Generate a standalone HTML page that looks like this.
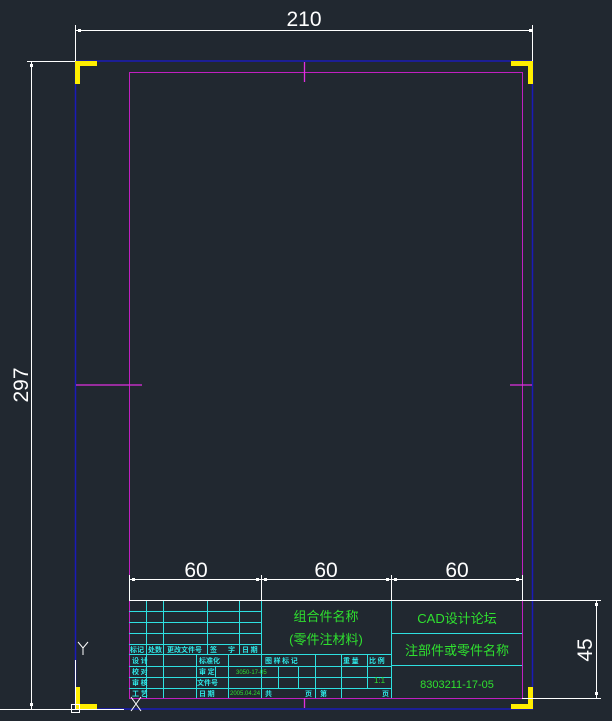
<!DOCTYPE html>
<html><head><meta charset="utf-8"><style>
html,body{margin:0;padding:0;background:#212830;width:612px;height:721px;overflow:hidden}
svg{display:block}
.g{font-family:"Liberation Sans","Noto Sans CJK SC",sans-serif;fill:#2fe02f}
.c{font-family:"Noto Sans CJK SC",sans-serif;fill:#2ee8e8;font-size:7px;font-weight:bold}
</style></head><body>
<svg width="612" height="721" viewBox="0 0 612 721" xmlns="http://www.w3.org/2000/svg">
<rect x="75.5" y="61" width="457" height="648" fill="none" stroke="#1a1ab8" stroke-width="1.5"/>
<rect x="129.5" y="72.5" width="393" height="626" fill="none" stroke="#c020c0" stroke-width="1"/>
<g stroke="#e030e0" stroke-width="1.3">
<line x1="304.5" y1="62" x2="304.5" y2="82"/>
<line x1="304.5" y1="698" x2="304.5" y2="708"/>
<line x1="76" y1="385" x2="142" y2="385"/>
<line x1="510" y1="385" x2="532" y2="385"/>
</g>
<g fill="#ffee00">
<rect x="75" y="61" width="22" height="5"/><rect x="75" y="61" width="5" height="23"/>
<rect x="511" y="61" width="22" height="5"/><rect x="528" y="61" width="5" height="23"/>
<rect x="75" y="704" width="22" height="5"/><rect x="75" y="687" width="5" height="22"/>
<rect x="511" y="704" width="22" height="5"/><rect x="528" y="687" width="5" height="22"/>
</g>
<g stroke="#fff" stroke-width="1" fill="none">
<line x1="75.5" y1="25" x2="75.5" y2="61"/><line x1="532.5" y1="25" x2="532.5" y2="61"/>
<line x1="75" y1="30.5" x2="532" y2="30.5"/>
<line x1="27" y1="61.5" x2="75" y2="61.5"/><line x1="27" y1="709.5" x2="75" y2="709.5"/>
<line x1="31.5" y1="61" x2="31.5" y2="709"/>
<line x1="129.5" y1="575" x2="129.5" y2="600"/><line x1="261.5" y1="575" x2="261.5" y2="600"/>
<line x1="391.5" y1="575" x2="391.5" y2="600"/><line x1="522.5" y1="575" x2="522.5" y2="600"/>
<line x1="129" y1="579.5" x2="522" y2="579.5"/>
<line x1="522" y1="600.5" x2="601" y2="600.5"/><line x1="522" y1="698.5" x2="601" y2="698.5"/>
<line x1="596.5" y1="600" x2="596.5" y2="698"/>
<line x1="0" y1="709.5" x2="124" y2="709.5"/>
<line x1="75.5" y1="660" x2="75.5" y2="709"/>
<rect x="71.5" y="704.5" width="8" height="8"/>
<path d="M131 697 L141 711 M141 697 L131 711"/>
<path d="M78 642 L83 648 L88 642 M83 648 L83 655"/>
</g>
<g fill="#fff">
<rect x="78" y="29" width="3" height="3"/><rect x="529" y="29" width="3" height="3"/>
<rect x="30" y="64" width="3" height="3"/><rect x="30" y="703" width="3" height="3"/>
<rect x="132" y="578" width="3" height="3"/><rect x="256" y="578" width="3" height="3"/>
<rect x="264" y="578" width="3" height="3"/><rect x="386" y="578" width="3" height="3"/>
<rect x="394" y="578" width="3" height="3"/><rect x="516" y="578" width="3" height="3"/>
<rect x="595" y="603" width="3" height="3"/><rect x="595" y="692" width="3" height="3"/>
</g>
<g font-family="Liberation Sans Narrow,Liberation Sans,sans-serif" font-size="21" fill="#fff" text-anchor="middle">
<text x="304" y="26">210</text>
<text x="196" y="577">60</text><text x="326" y="577">60</text><text x="457" y="577">60</text>
<text transform="translate(28,385) rotate(-90)">297</text>
<text transform="translate(592,650) rotate(-90)">45</text>
</g>
<g stroke="#2ee0e0" stroke-width="1" fill="none">
<line x1="261.5" y1="600" x2="261.5" y2="698"/>
<line x1="391.5" y1="600" x2="391.5" y2="698"/>
<line x1="129" y1="611.5" x2="261" y2="611.5"/><line x1="129" y1="622.5" x2="261" y2="622.5"/>
<line x1="129" y1="633.5" x2="261" y2="633.5"/><line x1="129" y1="644.5" x2="261" y2="644.5"/>
<line x1="129" y1="654.5" x2="391" y2="654.5"/><line x1="129" y1="666.5" x2="391" y2="666.5"/>
<line x1="129" y1="677.5" x2="391" y2="677.5"/><line x1="129" y1="688.5" x2="391" y2="688.5"/>
<line x1="146.5" y1="600" x2="146.5" y2="698"/><line x1="163.5" y1="600" x2="163.5" y2="698"/>
<line x1="207.5" y1="600" x2="207.5" y2="654"/><line x1="239.5" y1="600" x2="239.5" y2="654"/>
<line x1="196.5" y1="654" x2="196.5" y2="698"/><line x1="228.5" y1="654" x2="228.5" y2="698"/>
<line x1="215.5" y1="666" x2="215.5" y2="677"/>
<line x1="278.5" y1="666" x2="278.5" y2="688"/><line x1="298.5" y1="666" x2="298.5" y2="688"/>
<line x1="315.5" y1="654" x2="315.5" y2="698"/><line x1="341.5" y1="654" x2="341.5" y2="698"/>
<line x1="367.5" y1="654" x2="367.5" y2="688"/>
<line x1="391" y1="633.5" x2="522" y2="633.5"/><line x1="391" y1="665.5" x2="522" y2="665.5"/>
</g>
<line x1="129" y1="600.5" x2="522" y2="600.5" stroke="#fff"/>
<g class="c">
<text x="130" y="652">标记</text><text x="148" y="652">处数</text><text x="167" y="652">更改文件号</text><text x="210" y="652">签</text><text x="228" y="652">字</text><text x="242" y="652">日 期</text>
<text x="132" y="663">设 计</text><text x="199" y="663">标准化</text>
<text x="132" y="674">校 对</text><text x="199" y="674">审 定</text>
<text x="132" y="685">审 核</text><text x="197" y="685">文件号</text>
<text x="132" y="696">工 艺</text><text x="199" y="696">日 期</text>
<text x="265" y="663">图 样 标 记</text><text x="343" y="663">重 量</text><text x="369" y="663">比 例</text>
<text x="265" y="696">共</text><text x="305" y="696">页</text><text x="320" y="696">第</text><text x="382" y="696">页</text>
</g>
<g class="g">
<text x="236" y="674" font-size="6">3050-17-05</text>
<text x="230" y="695" font-size="6">2005.04.24</text>
<text x="374" y="683" font-size="8">1:1</text>
<text x="326" y="621" font-size="13" text-anchor="middle">组合件名称</text>
<text x="326" y="644" font-size="13" text-anchor="middle">(零件注材料)</text>
<text x="457" y="623" font-size="13" text-anchor="middle">CAD设计论坛</text>
<text x="457" y="655" font-size="13" text-anchor="middle">注部件或零件名称</text>
<text x="457" y="688" font-size="11" text-anchor="middle">8303211-17-05</text>
</g>
</svg>
</body></html>
